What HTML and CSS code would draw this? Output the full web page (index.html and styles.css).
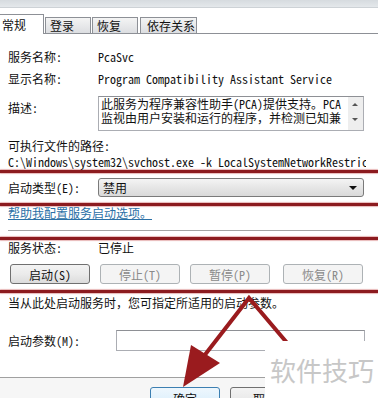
FILE: index.html
```html
<!DOCTYPE html>
<html lang="zh-CN">
<head>
  <meta charset="UTF-8" />
  <title>服务属性</title>
  <link rel="stylesheet" href="styles.css">
</head>
<body>
  <div class="window">
    <div class="top-strip"></div>

    <div class="tabs">
      <div class="tab active">常规</div>
      <div class="tab">登录</div>
      <div class="tab">恢复</div>
      <div class="tab wide">依存关系</div>
    </div>

    <div class="panel">
      <div class="row first">
        <span class="label">服务名称:</span>
        <span>PcaSvc</span>
      </div>
      <div class="row">
        <span class="label">显示名称:</span>
        <span>Program Compatibility Assistant Service</span>
      </div>
      <div class="desc-row">
        <span class="label desc-label">描述:</span>
        <div class="desc-box">
          <div class="desc-text">
            <div>此服务为程序兼容性助手(PCA)提供支持。PCA</div>
            <div>监视由用户安装和运行的程序，并检测已知兼</div>
          </div>
          <div class="scroll">
            <span class="arrow-up"></span>
            <span class="arrow-down"></span>
          </div>
        </div>
      </div>
      <div class="row path-label">可执行文件的路径:</div>
      <div class="row path">C:\Windows\system32\svchost.exe -k LocalSystemNetworkRestricted</div>

      <div class="mark"></div>

      <div class="row select-row">
        <span class="label">启动类型(E):</span>
        <div class="select">
          <span>禁用</span>
          <span class="caret"></span>
        </div>
      </div>

      <div class="mark mark-2"></div>

      <div class="row link-row"><a href="#" class="help-link">帮助我配置服务启动选项。</a></div>

      <div class="sep"></div>

      <div class="mark mark-3"></div>

      <div class="row">
        <span class="label">服务状态:</span>
        <span>已停止</span>
      </div>

      <div class="buttons">
        <button class="btn">启动(S)</button>
        <button class="btn" disabled>停止(T)</button>
        <button class="btn" disabled>暂停(P)</button>
        <button class="btn last" disabled>恢复(R)</button>
      </div>

      <div class="mark mark-4"></div>

      <div class="row note">当从此处启动服务时，您可指定所适用的启动参数。</div>

      <div class="row param-row">
        <span class="label param-label">启动参数(M):</span>
        <div class="param-input"></div>
      </div>
    </div>

    <div class="footer">
      <button class="btn ok">确定</button>
      <button class="btn">取消</button>
    </div>

    <!-- red annotation arrow -->
    <svg class="annot" width="378" height="398" viewBox="0 0 378 398">
      <polyline points="288,344 249,298 204,356" fill="none" stroke="#9a1b1e" stroke-width="4" stroke-linejoin="miter" />
      <polygon points="183,387 191,345 220,363" fill="#9a1b1e" />
    </svg>

    <div class="watermark">软件技巧</div>
  </div>
</body>
</html>
```

FILE: styles.css
```css
body {
  margin: 0;
  padding: 0;
  background-color: #fff;
  color: #111;
  font-family: "Noto Sans Mono CJK SC", "Noto Sans CJK SC", monospace;
  font-size: 12px;
}

.window {
  position: relative;
  width: 378px;
  height: 398px;
  overflow: hidden;
  background-color: #fff;
}

.top-strip {
  height: 7px;
  background: linear-gradient(#d6dbdf, #e4e8eb);
  border-bottom: 1px solid #cdd2d6;
}

.tabs {
  display: flex;
  align-items: flex-end;
  height: 25px;
  border-bottom: 1px solid #8d9096;
}

.tab {
  box-sizing: border-box;
  width: 46px;
  height: 16px;
  line-height: 16px;
  padding-left: 4px;
  margin-left: 1px;
  border: 1px solid #8d9096;
  border-bottom: none;
  background: linear-gradient(#f4f4f4, #dcdee1);
}

.tab.active {
  width: 44px;
  height: 20px;
  line-height: 20px;
  padding-left: 2px;
  margin-left: 0;
  margin-bottom: -1px;
  border-left: none;
  background: #fff;
}

.tab.wide {
  width: 57px;
  padding-left: 6px;
  margin-left: 2px;
}

.panel {
  padding: 0 8px;
}

.row {
  display: flex;
  align-items: center;
  height: 16px;
  line-height: 16px;
  white-space: nowrap;
}

.row.first {
  margin-top: 15px;
}

.row + .row {
  margin-top: 6px;
}

.label {
  width: 90px;
  flex-shrink: 0;
}

.desc-row {
  display: flex;
  margin-top: 9px;
}

.desc-label {
  padding-top: 4px;
  line-height: 16px;
}

.desc-box {
  display: flex;
  width: 266px;
  height: 35px;
  box-sizing: border-box;
  border: 1px solid #abadb3;
  border-top-color: #8e9095;
  overflow: hidden;
}

.desc-text {
  flex: 1;
  padding-left: 2px;
  line-height: 14px;
  white-space: nowrap;
  overflow: hidden;
}

.scroll {
  position: relative;
  width: 15px;
  background-color: #eeeeee;
}

.arrow-up,
.arrow-down {
  position: absolute;
  left: 4px;
  width: 0;
  height: 0;
  border-left: 3px solid transparent;
  border-right: 3px solid transparent;
}

.arrow-up {
  top: 6px;
  border-bottom: 3px solid #555;
}

.arrow-down {
  top: 21px;
  border-top: 3px solid #555;
}

.row.path-label {
  margin-top: 7px;
}

.row.path {
  margin-top: 0;
  width: 358px;
  overflow: hidden;
}

.mark {
  height: 3px;
  margin: 0 -8px;
  background-color: #8c1b1f;
  box-shadow: 0 1px 1px #e8b9b9, 0 -1px 1px #e8b9b9;
}

.select-row {
  height: 19px;
  margin-top: 5px;
}

.select {
  box-sizing: border-box;
  display: flex;
  align-items: center;
  justify-content: space-between;
  width: 266px;
  height: 19px;
  padding: 0 6px 0 4px;
  border: 1px solid #7a7a7a;
  border-radius: 3px;
  background: linear-gradient(#f4f4f4, #e6e6e6 50%, #d9d9d9);
}

.caret {
  width: 0;
  height: 0;
  border-left: 4px solid transparent;
  border-right: 4px solid transparent;
  border-top: 4px solid #111;
}

.mark-2 {
  margin-top: 6px;
}

.row.link-row {
  margin-top: 0;
  height: 14px;
}

.help-link {
  color: #2b70a6;
  text-decoration: underline;
}

.sep {
  height: 1px;
  margin: 10px 9px 0 0;
  background-color: #a4a4a4;
}

.mark-3 {
  margin-top: 6px;
}

.mark-3 + .row {
  margin-top: 0;
}

.buttons {
  display: flex;
  gap: 10px;
  margin-top: 8px;
  padding-left: 2px;
}

.btn {
  box-sizing: border-box;
  width: 80px;
  height: 20px;
  padding: 0;
  font-family: inherit;
  font-size: 12px;
  color: #111;
  border: 1px solid #707070;
  border-radius: 3px;
  background: linear-gradient(#f3f3f3, #ebebeb 50%, #dcdcdc);
}

.btn:disabled {
  color: #8a8a8a;
  border-color: #adb2b5;
  background: #f4f4f4;
}

.btn.last {
  margin-left: 3px;
}

.mark-4 {
  margin-top: 6px;
}

.row.note {
  margin-top: 3px;
  height: 14px;
}

.row.param-row {
  margin-top: 20px;
  height: 21px;
}

.param-label {
  width: 108px;
}

.param-input {
  box-sizing: border-box;
  width: 249px;
  height: 21px;
  border: 1px solid #abadb3;
  border-top-color: #8e9095;
  background: #fff;
}

.footer {
  display: flex;
  gap: 10px;
  margin-top: 26px;
  padding: 9px 0 0 150px;
  height: 30px;
  border-top: 1px solid #a0a0a0;
  background-color: #f6f6f6;
}

.footer .btn {
  width: 70px;
  height: 22px;
}

.btn.ok {
  border-color: #3c7fb1;
  background: linear-gradient(#eef7fd, #d6ecfb);
}

.annot {
  position: absolute;
  left: 0;
  top: 0;
}

.watermark {
  position: absolute;
  left: 265px;
  top: 341px;
  width: 113px;
  height: 57px;
  box-sizing: border-box;
  padding: 14px 0 0 5px;
  background-color: #fff;
  color: #c7c7c7;
  font-family: "Noto Sans CJK SC", sans-serif;
  font-size: 26px;
  line-height: 30px;
}
```
